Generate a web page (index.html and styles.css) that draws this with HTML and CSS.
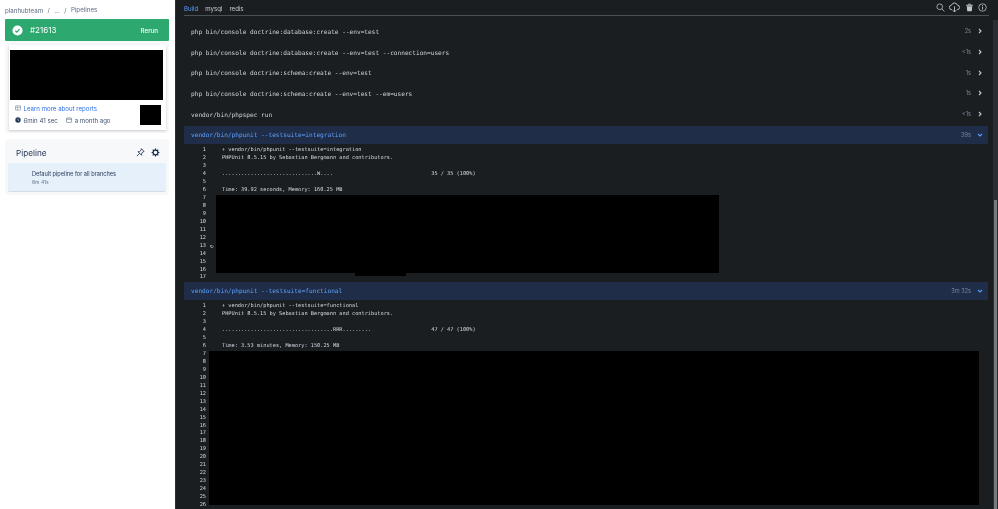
FILE: index.html
```html
<!DOCTYPE html>
<html lang="en">
<head>
<meta charset="utf-8">
<title>Pipelines</title>
<link rel="stylesheet" href="styles.css">
</head>
<body>
<div class="app">
  <aside class="side">
    <nav class="crumbs"><span>planhubteam</span><span>/</span><span>...</span><span>/</span><span class="crumb-last">Pipelines</span></nav>
    <div class="status">
      <svg class="status-icon" viewBox="0 0 12 12"><circle cx="6" cy="6" r="5.5" fill="#fff"/><path d="M3.6 6.2l1.7 1.6 3-3.3" fill="none" stroke="#2da86f" stroke-width="1.4"/></svg>
      <span class="status-num">#21613</span>
      <span class="status-rerun">Rerun</span>
    </div>
    <div class="report-wrap">
      <div class="report">
        <div class="report-black"></div>
        <div class="report-foot">
          <div class="report-info">
            <div class="report-link">
              <svg class="ico-s" viewBox="0 0 8 8"><rect x=".5" y="1.2" width="7" height="5.6" rx=".6" fill="none" stroke="#6b778c" stroke-width=".8"/><path d="M.5 3h7M3.5 3v3.6" stroke="#6b778c" stroke-width=".7"/></svg>
              <span>Learn more about reports</span>
            </div>
            <div class="report-meta">
              <svg class="ico-s" viewBox="0 0 8 8"><circle cx="4" cy="4" r="3.6" fill="#253858"/><path d="M4 2v2.2l1.4.8" fill="none" stroke="#fff" stroke-width=".7"/></svg>
              <span class="meta-time">6min 41 sec</span>
              <svg class="ico-s" viewBox="0 0 8 8"><rect x=".7" y="1.2" width="6.6" height="6" rx=".6" fill="none" stroke="#5e6c84" stroke-width=".8"/><path d="M.7 3h6.6" stroke="#5e6c84" stroke-width=".9"/></svg>
              <span>a month ago</span>
            </div>
          </div>
          <div class="report-thumb"></div>
        </div>
      </div>
    </div>
    <section class="pipe">
      <div class="pipe-head">
        <h2>Pipeline</h2>
        <svg class="pipe-ico" viewBox="0 0 12 12"><path d="M7.4 1.300l3.300 3.300-1.700.8-1.700 2.500.1 1.800L2.700 4.900l1.800.1 2.100-1.900z M4.300 7.700L1.500 10.500" fill="none" stroke="#172b4d" stroke-width="1.100" stroke-linejoin="round" stroke-linecap="round"/></svg>
        <svg class="pipe-ico" viewBox="0 0 12 12"><circle cx="6" cy="6" r="3.200" fill="none" stroke="#172b4d" stroke-width="1.600"/><path d="M6 .8v1.800M6 9.400v1.800M.8 6h1.800M9.400 6h1.800M2.300 2.300l1.300 1.300M8.400 8.400l1.300 1.300M2.300 9.700l1.300-1.300M8.400 3.600l1.300-1.300" stroke="#172b4d" stroke-width="1.500"/></svg>
      </div>
      <div class="pipe-item">
        <div class="pipe-title">Default pipeline for all branches</div>
        <div class="pipe-sub">6m 41s</div>
      </div>
    </section>
  </aside>

  <main class="main">
    <div class="content">
      <header class="tabs">
        <span class="tab tab-on">Build</span>
        <span class="tab">mysql</span>
        <span class="tab">redis</span>
        <div class="tools">
          <svg class="tool" viewBox="0 0 12 12"><circle cx="5" cy="5" r="3.800" fill="none" stroke="#c1c7d0" stroke-width="1"/><path d="M7.800 7.800l3.400 3.400" stroke="#c1c7d0" stroke-width="1.100"/></svg>
          <svg class="tool tool-wide" viewBox="0 0 12 12"><path d="M3.400 8.300H3a2.400 2.400 0 0 1-.3-4.800 3.400 3.400 0 0 1 6.500 0A2.400 2.400 0 0 1 9 8.300h-.4" fill="none" stroke="#c1c7d0" stroke-width="1"/><path d="M6 4.800v6M4.200 9l1.800 1.900L7.800 9" fill="none" stroke="#c1c7d0" stroke-width="1"/></svg>
          <svg class="tool" viewBox="0 0 12 12"><path d="M1.500 2.400h9v1.200h-9zM4.200 1h3.600v1H4.200zM2.300 4.400h7.400l-.7 6.600H3z" fill="#c1c7d0"/></svg>
          <svg class="tool" viewBox="0 0 12 12"><circle cx="6" cy="6" r="5" fill="none" stroke="#c1c7d0" stroke-width="1"/><path d="M6 5.200v3.500" stroke="#c1c7d0" stroke-width="1.200"/><circle cx="6" cy="3.500" r=".7" fill="#c1c7d0"/></svg>
        </div>
      </header>

      <div class="steps">
        <div class="step"><span class="cmd">php bin/console doctrine:database:create --env=test</span><span class="dur">2s</span><svg class="chev" viewBox="0 0 6 6"><path d="M2 1l2 2-2 2" fill="none" stroke="#c1c7d0" stroke-width="1.100"/></svg></div>
        <div class="step"><span class="cmd">php bin/console doctrine:database:create --env=test --connection=users</span><span class="dur">&lt;1s</span><svg class="chev" viewBox="0 0 6 6"><path d="M2 1l2 2-2 2" fill="none" stroke="#c1c7d0" stroke-width="1.100"/></svg></div>
        <div class="step"><span class="cmd">php bin/console doctrine:schema:create --env=test</span><span class="dur">1s</span><svg class="chev" viewBox="0 0 6 6"><path d="M2 1l2 2-2 2" fill="none" stroke="#c1c7d0" stroke-width="1.100"/></svg></div>
        <div class="step"><span class="cmd">php bin/console doctrine:schema:create --env=test --em=users</span><span class="dur">1s</span><svg class="chev" viewBox="0 0 6 6"><path d="M2 1l2 2-2 2" fill="none" stroke="#c1c7d0" stroke-width="1.100"/></svg></div>
        <div class="step"><span class="cmd">vendor/bin/phpspec run</span><span class="dur">&lt;1s</span><svg class="chev" viewBox="0 0 6 6"><path d="M2 1l2 2-2 2" fill="none" stroke="#c1c7d0" stroke-width="1.100"/></svg></div>
      </div>

      <div class="step step-open"><span class="cmd">vendor/bin/phpunit --testsuite=integration</span><span class="dur">39s</span><svg class="chev" viewBox="0 0 6 6"><path d="M1 2l2 2 2-2" fill="none" stroke="#579dff" stroke-width="1.100"/></svg></div>
      <div class="log log-a">
        <div class="line"><span class="n">1</span><span class="t">+ vendor/bin/phpunit --testsuite=integration</span></div>
        <div class="line"><span class="n">2</span><span class="t">PHPUnit 8.5.15 by Sebastian Bergmann and contributors.</span></div>
        <div class="line"><span class="n">3</span><span class="t"></span></div>
        <div class="line"><span class="n">4</span><span class="t">..............................W....                               35 / 35 (100%)</span></div>
        <div class="line"><span class="n">5</span><span class="t"></span></div>
        <div class="line"><span class="n">6</span><span class="t">Time: 39.92 seconds, Memory: 160.25 MB</span></div>
        <div class="line"><span class="n">7</span><span class="t"></span></div>
        <div class="line"><span class="n">8</span><span class="t"></span></div>
        <div class="line"><span class="n">9</span><span class="t"></span></div>
        <div class="line"><span class="n">10</span><span class="t"></span></div>
        <div class="line"><span class="n">11</span><span class="t"></span></div>
        <div class="line"><span class="n">12</span><span class="t"></span></div>
        <div class="line"><span class="n">13</span><span class="rf">↻</span><span class="t"></span></div>
        <div class="line"><span class="n">14</span><span class="t"></span></div>
        <div class="line"><span class="n">15</span><span class="t"></span></div>
        <div class="line"><span class="n">16</span><span class="t"></span></div>
        <div class="line"><span class="n">17</span><span class="t"></span></div>
        <div class="black black-a1"></div>
        <div class="black black-a2"></div>
      </div>

      <div class="step step-open"><span class="cmd">vendor/bin/phpunit --testsuite=functional</span><span class="dur">3m 32s</span><svg class="chev" viewBox="0 0 6 6"><path d="M1 2l2 2 2-2" fill="none" stroke="#579dff" stroke-width="1.100"/></svg></div>
      <div class="log log-b">
        <div class="line"><span class="n">1</span><span class="t">+ vendor/bin/phpunit --testsuite=functional</span></div>
        <div class="line"><span class="n">2</span><span class="t">PHPUnit 8.5.15 by Sebastian Bergmann and contributors.</span></div>
        <div class="line"><span class="n">3</span><span class="t"></span></div>
        <div class="line"><span class="n">4</span><span class="t">...................................RRR.........                   47 / 47 (100%)</span></div>
        <div class="line"><span class="n">5</span><span class="t"></span></div>
        <div class="line"><span class="n">6</span><span class="t">Time: 3.53 minutes, Memory: 150.25 MB</span></div>
        <div class="line"><span class="n">7</span><span class="t"></span></div>
        <div class="line"><span class="n">8</span><span class="t"></span></div>
        <div class="line"><span class="n">9</span><span class="t"></span></div>
        <div class="line"><span class="n">10</span><span class="t"></span></div>
        <div class="line"><span class="n">11</span><span class="t"></span></div>
        <div class="line"><span class="n">12</span><span class="t"></span></div>
        <div class="line"><span class="n">13</span><span class="t"></span></div>
        <div class="line"><span class="n">14</span><span class="t"></span></div>
        <div class="line"><span class="n">15</span><span class="t"></span></div>
        <div class="line"><span class="n">16</span><span class="t"></span></div>
        <div class="line"><span class="n">17</span><span class="t"></span></div>
        <div class="line"><span class="n">18</span><span class="t"></span></div>
        <div class="line"><span class="n">19</span><span class="t"></span></div>
        <div class="line"><span class="n">20</span><span class="t"></span></div>
        <div class="line"><span class="n">21</span><span class="t"></span></div>
        <div class="line"><span class="n">22</span><span class="t"></span></div>
        <div class="line"><span class="n">23</span><span class="t"></span></div>
        <div class="line"><span class="n">24</span><span class="t"></span></div>
        <div class="line"><span class="n">25</span><span class="t"></span></div>
        <div class="line"><span class="n">26</span><span class="t"></span></div>
        <div class="black black-b"></div>
      </div>
    </div>
    <div class="scroll"><div class="thumb"></div></div>
  </main>
</div>
</body>
</html>
```
FILE: styles.css
```css
* { box-sizing: border-box; }
html, body { margin: 0; height: 100%; overflow: hidden; background: #fff; }
body { font-family: "Inter", "Liberation Sans", sans-serif; color: #172b4d; }

.app { display: flex; width: 998px; height: 509px; overflow: hidden; filter: blur(.3px); }

/* Sidebar */
.side { width: 175px; flex: none; padding: 6px 6px 0 5px; background: #fff; }
.crumbs { display: flex; gap: 4.500px; height: 13px; align-items: flex-start; font-size: 6.200px; line-height: 8px; color: #5e6c84; padding-top: 1px; }
.crumb-last { margin-top: -1px; }
.status { height: 22px; background: #2da86f; display: flex; align-items: center; padding: 0 11px 0 7px; color: #fff; border-radius: 1px; }
.status-icon { width: 11px; height: 11px; margin-right: 7px; }
.status-num { font-size: 8px; font-weight: 400; flex: 1; }
.status-rerun { font-size: 6.200px; font-weight: 500; }
.report-wrap { background: #f7f8f9; padding: 4px 0 3px 4px; border-radius: 0 0 3px 3px; }
.report { width: 157px; height: 85px; background: #fff; box-shadow: 0 1px 2px rgba(9,30,66,.2); padding-top: 5px; }
.report-black { height: 50px; background: #000; margin: 0 3px 0 1px; }
.report-foot { display: flex; margin-top: 5px; padding: 0 5px 0 6px; }
.report-info { flex: 1; font-size: 6.100px; margin-top: -1px; }
.report-link { display: flex; align-items: center; gap: 2.500px; color: #2f6fe4; height: 8px; }
.report-meta { display: flex; align-items: center; gap: 2.500px; color: #42526e; height: 8px; margin-top: 4px; white-space: nowrap; }
.meta-time { margin-right: 6px; }
.ico-s { width: 6px; height: 6px; flex: none; }
.report-thumb { width: 21px; height: 20px; background: #000; }

.pipe { margin-top: 6px; height: 56px; background: #f7f8f9; border-radius: 3px; padding: 0 3px; }
.pipe-head { display: flex; align-items: center; height: 24px; padding: 3px 6px 0 8px; gap: 6px; }
.pipe-head h2 { flex: 1; margin: 0; font-size: 8.200px; font-weight: 400; color: #253858; }
.pipe-ico { width: 9px; height: 9px; }
.pipe-item { height: 29px; background: #e6f0fb; border-bottom: 1px solid #d5dbe3; padding: 8px 0 0 24px; border-radius: 2px; }
.pipe-title { font-size: 5.600px; line-height: 7px; color: #253858; }
.pipe-sub { font-size: 5px; line-height: 7px; margin-top: 1px; color: #6b778c; }

/* Main */
.main { flex: 1; display: flex; background: #1a1e21; min-width: 0; border-left: 1px solid #2a2f34; }
.content { width: 813px; flex: none; padding-left: 8px; }
.tabs { display: flex; align-items: center; height: 16px; border-bottom: 1px solid #4a5058; padding-top: 2px; font-size: 6.100px; color: #c8ccd3; gap: 7px; }
.tab-on { color: #579dff; }
.tools { margin-left: auto; display: flex; align-items: center; gap: 4.500px; padding-right: 2px; margin-top: -3px; }
.tool { width: 9px; height: 9px; display: block; }
.tool-wide { width: 11px; height: 11px; }

.steps { padding-top: 5px; }
.step { display: flex; align-items: center; height: 20.700px; margin-right: 1px; padding: 0 5px 0 7px; font-family: "DejaVu Sans Mono", monospace; }
.cmd { flex: 1; font-size: 6.130px; color: #d0d4da; white-space: pre; }
.dur { font-family: "Inter", sans-serif; font-size: 5.600px; color: #7a869a; margin-right: 6px; }
.chev { width: 6px; height: 6px; }
.step-open { height: 18px; margin-top: 1.500px; background: #1f2d48; border-radius: 1px; }
.step-open .cmd { color: #5ea2ff; }
.log + .step-open { margin-top: 0; }

.log { position: relative; padding-top: 2.500px; font-family: "DejaVu Sans Mono", monospace; font-size: 5.280px; color: #d8dce2; }
.log-a { height: 138px; }
.line { display: flex; height: 7.940px; line-height: 7.940px; }
.n { width: 22px; text-align: right; flex: none; }
.rf { width: 0; margin-left: 4px; font-size: 6px; color: #c1c7d0; }
.t { margin-left: 16px; white-space: pre; }
.black { position: absolute; background: #000; }
.black-a1 { left: 32px; top: 51px; width: 503px; height: 78px; }
.black-a2 { left: 171px; top: 129px; width: 51px; height: 3px; }
.black-b { left: 25px; top: 51px; width: 770px; height: 154px; }

.scroll { flex: none; width: 5px; margin: 20px 0 0 auto; background: #2b2f33; }
.thumb { width: 3px; margin: 180px 0 0 1px; height: 309px; background: #77797c; }
```
